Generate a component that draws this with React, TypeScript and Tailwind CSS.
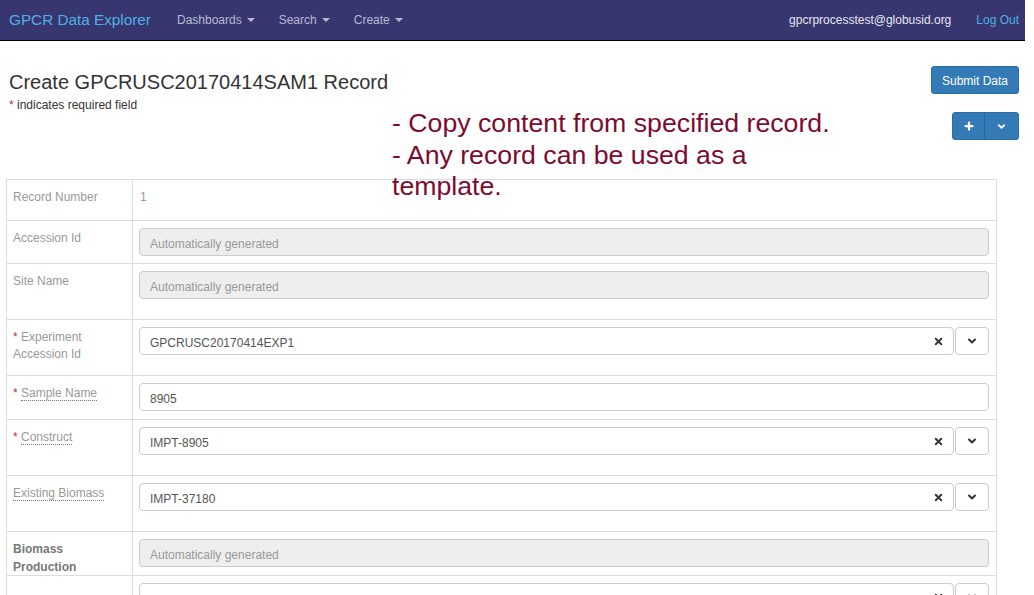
import React from 'react';
import { Plus, ChevronDown, X } from 'lucide-react';

const font = { fontFamily: '"Liberation Sans", Arial, sans-serif' };

const Caret: React.FC = () => (
  <span className="ml-[5px] inline-block h-0 w-0 border-x-[4px] border-t-[4px] border-x-transparent border-t-[#b9b8d3]" />
);

const Navbar: React.FC = () => {
  return (
    <nav className="flex h-[41px] items-center border-b border-black bg-[#37366f] pl-[9px] pr-[6px]">
      <span className="text-[15.3px] text-[#4fb0e6]">GPCR Data Explorer</span>
      <div className="ml-[26px] flex items-center gap-[24px] text-[12px] text-[#b9b8d3]">
        <span className="flex items-center">Dashboards<Caret /></span>
        <span className="flex items-center">Search<Caret /></span>
        <span className="flex items-center">Create<Caret /></span>
      </div>
      <div className="ml-auto flex items-center gap-[25px] text-[12px]">
        <span className="text-[#e6e6f0]">gpcrprocesstest@globusid.org</span>
        <span className="text-[#4fb0e6]">Log Out</span>
      </div>
    </nav>
  );
};

const Req: React.FC = () => <span className="text-[#c9302c]">*</span>;

const Dotted: React.FC<{ children: React.ReactNode }> = ({ children }) => (
  <span className="border-b border-dotted border-[#777]">{children}</span>
);

const TextBox: React.FC<{ value: string; disabled?: boolean }> = ({ value, disabled }) => (
  <div
    className={
      disabled
        ? 'flex h-[28px] items-center rounded-[4px] border border-[#ccc] bg-[#eee] px-[10px] pt-[3px] text-[12px] text-[#999]'
        : 'flex h-[28px] items-center rounded-[4px] border border-[#ccc] bg-white px-[10px] pt-[3px] text-[12px] text-[#555]'
    }
  >
    {value}
  </div>
);

const SelectBox: React.FC<{ value: string }> = ({ value }) => (
  <div className="flex gap-[1px]">
    <div className="flex h-[28px] flex-1 items-center rounded-[4px] border border-[#ccc] bg-white pl-[10px] pr-[9px] text-[12px] text-[#555]">
      <span className="pt-[3px]">{value}</span>
      <X className="ml-auto text-[#333]" size={11} strokeWidth={4} />
    </div>
    <div className="flex h-[28px] w-[34px] items-center justify-center rounded-[4px] border border-[#ccc] bg-white">
      <ChevronDown className="text-[#333]" size={12} strokeWidth={4} />
    </div>
  </div>
);

interface RowProps {
  label: React.ReactNode;
  height: string;
  children: React.ReactNode;
  bold?: boolean;
  first?: boolean;
}

const Row: React.FC<RowProps> = ({ label, height, children, bold, first }) => (
  <div className={`flex ${height} ${first ? '' : 'border-t border-[#ddd]'}`}>
    <div
      className={
        bold
          ? 'w-[126px] shrink-0 border-r border-[#ddd] px-[6px] pt-[8px] text-[12px] font-bold leading-[18px] text-[#777]'
          : 'w-[126px] shrink-0 border-r border-[#ddd] px-[6px] pt-[9px] text-[12px] leading-[17px] text-[#999]'
      }
    >
      {label}
    </div>
    <div className="flex-1 pl-[6px] pr-[7px] pt-[7px]">{children}</div>
  </div>
);

export default function App() {
  return (
    <div className="relative h-[595px] w-[1025px] overflow-hidden bg-white text-[#333]" style={font}>
      <Navbar />

      <div className="flex justify-between pl-[9px] pr-[6px] pt-[25px]">
        <div className="mt-[5px]">
          <h1 className="text-[20px] leading-[22px] text-[#333]">Create GPCRUSC20170414SAM1 Record</h1>
          <p className="mt-[5px] text-[12px] leading-[14px] text-[#333]">
            <Req /> indicates required field
          </p>
        </div>
        <div className="flex flex-col items-end gap-[18px]">
          <button className="h-[28px] w-[88px] rounded-[3px] border border-[#2e6da4] bg-[#337ab7] pt-[2px] text-[12px] text-white">
            Submit Data
          </button>
          <div className="flex h-[28px] overflow-hidden rounded-[3px] border border-[#2e6da4] bg-[#337ab7]">
            <div className="flex w-[32px] items-center justify-center border-r border-[#2a6496]">
              <Plus className="text-white" size={12} strokeWidth={4.5} />
            </div>
            <div className="flex w-[33px] items-center justify-center">
              <ChevronDown className="text-white" size={11} strokeWidth={4} />
            </div>
          </div>
        </div>
      </div>

      <div className="ml-[6px] mt-[39px] w-[991px] border border-[#ddd]">
        <Row first label="Record Number" height="h-[40px]">
          <div className="pl-[1px] pt-[2px] text-[12px] leading-[17px] text-[#999]">1</div>
        </Row>
        <Row label="Accession Id" height="h-[43px]">
          <TextBox value="Automatically generated" disabled />
        </Row>
        <Row label="Site Name" height="h-[56px]">
          <TextBox value="Automatically generated" disabled />
        </Row>
        <Row
          label={
            <>
              <Req /> Experiment
              <br />
              Accession Id
            </>
          }
          height="h-[56px]"
        >
          <SelectBox value="GPCRUSC20170414EXP1" />
        </Row>
        <Row
          label={
            <>
              <Req /> <Dotted>Sample Name</Dotted>
            </>
          }
          height="h-[44px]"
        >
          <TextBox value="8905" />
        </Row>
        <Row
          label={
            <>
              <Req /> <Dotted>Construct</Dotted>
            </>
          }
          height="h-[56px]"
        >
          <SelectBox value="IMPT-8905" />
        </Row>
        <Row label={<Dotted>Existing Biomass</Dotted>} height="h-[56px]">
          <SelectBox value="IMPT-37180" />
        </Row>
        <Row
          bold
          label={
            <>
              Biomass
              <br />
              Production
            </>
          }
          height="h-[44px]"
        >
          <TextBox value="Automatically generated" disabled />
        </Row>
        <Row label="" height="h-[56px]">
          <SelectBox value="" />
        </Row>
      </div>

      <div className="absolute left-[392px] top-[108px] w-[450px] text-[26.7px] leading-[31.5px] text-[#7d0b2e]">
        - Copy content from specified record.
        <br />- Any record can be used as a template.
      </div>
    </div>
  );
}
